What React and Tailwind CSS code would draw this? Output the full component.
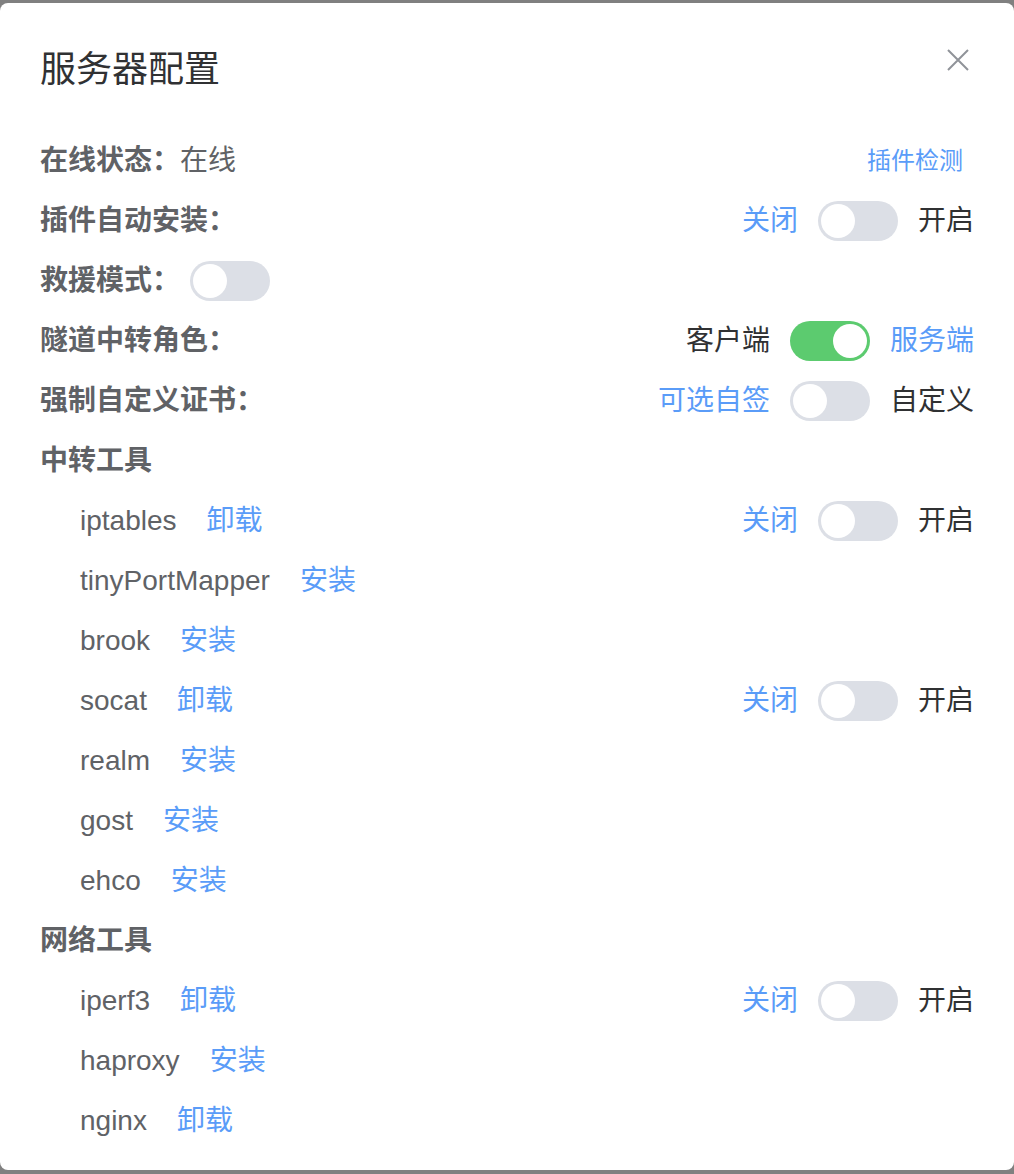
import React, { useState } from 'react';

const font = { fontFamily: '"Helvetica Neue", "Liberation Sans", "Noto Sans CJK SC", sans-serif' };

const Toggle = ({ on, onClick }) => (
  <button
    onClick={onClick}
    className={`relative w-[80px] h-[40px] rounded-full shrink-0 transition-colors ${on ? 'bg-[#5ccb6f]' : 'bg-[#dcdfe6]'}`}
  >
    <span
      className={`absolute top-[3px] w-[34px] h-[34px] rounded-full bg-white transition-all ${on ? 'left-[43px]' : 'left-[3px]'}`}
    ></span>
  </button>
);

// left label / switch / right label, active side in blue
const SwitchGroup = ({ off, onText, value, onChange }) => (
  <div className="flex items-center gap-[20px] text-[28px]">
    <span className={value ? 'text-[#303133]' : 'text-[#5a9cf8]'}>{off}</span>
    <Toggle on={value} onClick={() => onChange(!value)} />
    <span className={value ? 'text-[#5a9cf8]' : 'text-[#303133]'}>{onText}</span>
  </div>
);

const Row = ({ children }) => (
  <div className="h-[60px] flex items-center justify-between">{children}</div>
);

const Label = ({ children }) => (
  <span className="font-bold text-[#606266] text-[28px]">{children}</span>
);

const ToolRow = ({ name, installed, toggle, value, onChange }) => (
  <Row>
    <div className="flex items-center pl-[40px] text-[28px]">
      <span className="text-[#606266]">{name}</span>
      <span className="ml-[30px] text-[#5a9cf8] cursor-pointer">{installed ? '卸载' : '安装'}</span>
    </div>
    {toggle && <SwitchGroup off="关闭" onText="开启" value={value} onChange={onChange} />}
  </Row>
);

export default function App() {
  const [autoInstall, setAutoInstall] = useState(false);
  const [rescue, setRescue] = useState(false);
  const [role, setRole] = useState(true);
  const [cert, setCert] = useState(false);
  const [tools, setTools] = useState({ iptables: false, socat: false, iperf3: false });

  const relay = [
    { name: 'iptables', installed: true, toggle: true },
    { name: 'tinyPortMapper', installed: false },
    { name: 'brook', installed: false },
    { name: 'socat', installed: true, toggle: true },
    { name: 'realm', installed: false },
    { name: 'gost', installed: false },
    { name: 'ehco', installed: false },
  ];
  const net = [
    { name: 'iperf3', installed: true, toggle: true },
    { name: 'haproxy', installed: false },
    { name: 'nginx', installed: true },
  ];

  const renderTool = (t) => (
    <ToolRow
      key={t.name}
      {...t}
      value={tools[t.name]}
      onChange={(v) => setTools({ ...tools, [t.name]: v })}
    />
  );

  return (
    <div className="w-[1014px] h-[1174px] bg-[#808080] pt-[3px] pb-[4px]" style={font}>
      <div className="h-full bg-white rounded-[8px] px-[40px] relative">
        <div className="h-[128px] flex items-start pt-[43px]">
          <h1 className="text-[36px] leading-[48px] text-[#303133]">服务器配置</h1>
        </div>
        <button className="absolute right-[45px] top-[46px] w-[22px] h-[22px]">
          <svg viewBox="0 0 22 22" width="22" height="22" fill="none" stroke="#909399" strokeWidth="2">
            <path d="M1 1 L21 21 M21 1 L1 21" />
          </svg>
        </button>

        <Row>
          <div className="flex items-center">
            <Label>在线状态：</Label>
            <span className="text-[28px] text-[#606266]">在线</span>
          </div>
          <span className="text-[24px] text-[#5a9cf8] mr-[11px] cursor-pointer">插件检测</span>
        </Row>
        <Row>
          <Label>插件自动安装：</Label>
          <SwitchGroup off="关闭" onText="开启" value={autoInstall} onChange={setAutoInstall} />
        </Row>
        <Row>
          <div className="flex items-center gap-[10px]">
            <Label>救援模式：</Label>
            <Toggle on={rescue} onClick={() => setRescue(!rescue)} />
          </div>
        </Row>
        <Row>
          <Label>隧道中转角色：</Label>
          <SwitchGroup off="客户端" onText="服务端" value={role} onChange={setRole} />
        </Row>
        <Row>
          <Label>强制自定义证书：</Label>
          <SwitchGroup off="可选自签" onText="自定义" value={cert} onChange={setCert} />
        </Row>
        <Row>
          <Label>中转工具</Label>
        </Row>
        {relay.map(renderTool)}
        <Row>
          <Label>网络工具</Label>
        </Row>
        {net.map(renderTool)}
      </div>
    </div>
  );
}
